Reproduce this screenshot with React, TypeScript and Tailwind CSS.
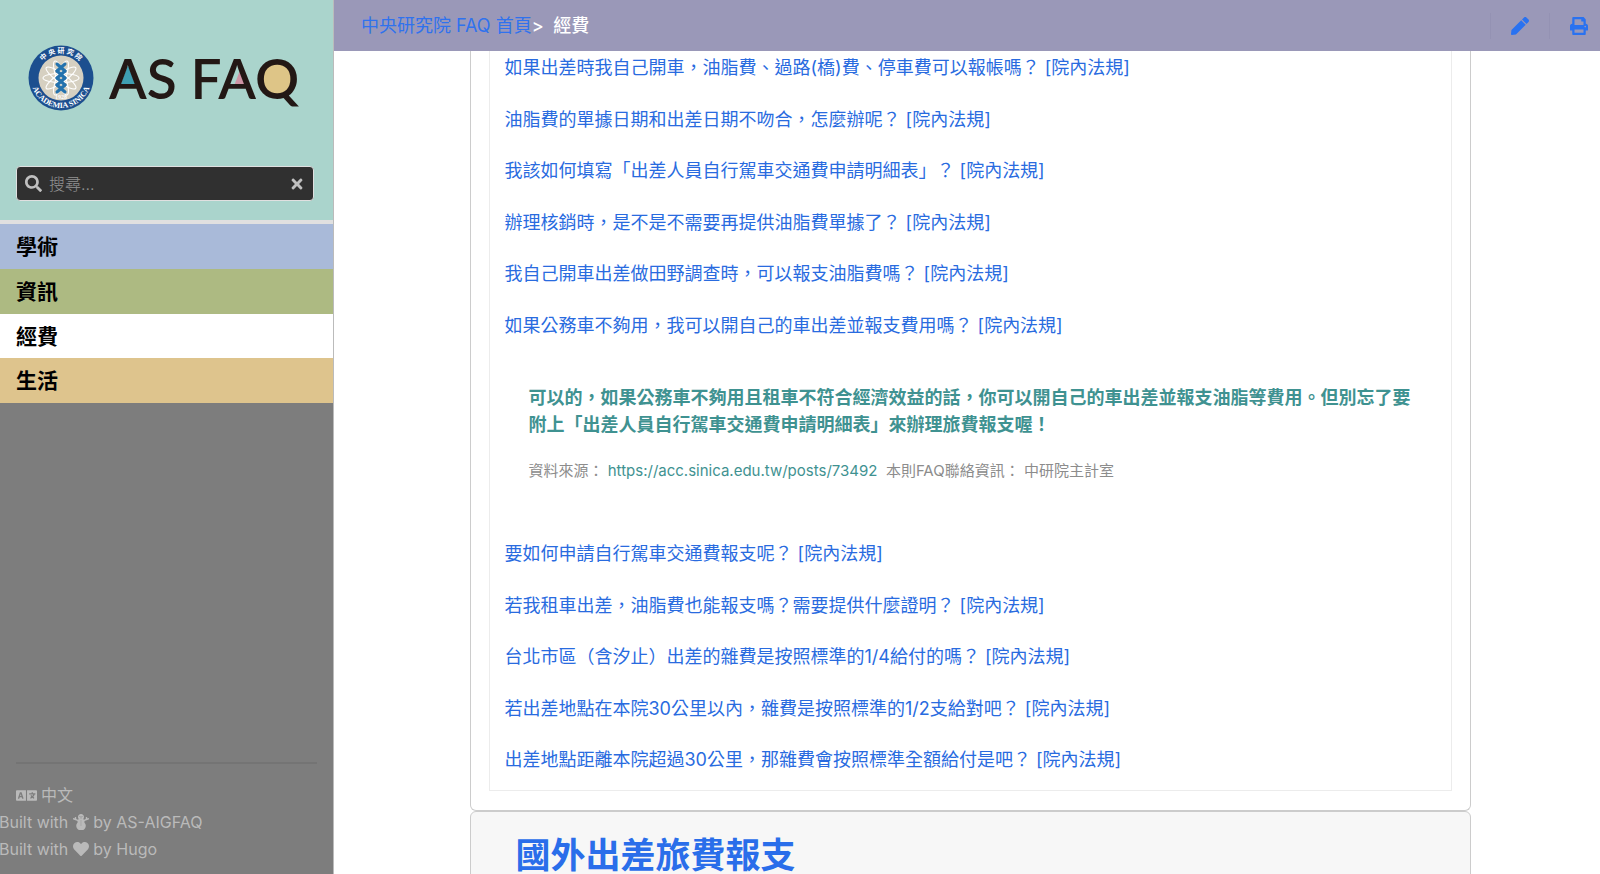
import React from "react";
import {
  FaHeart,
  FaLanguage,
  FaPen,
  FaPrint,
  FaSearch,
  FaSnowman,
  FaTimes,
} from "react-icons/fa";

const questionsBefore = [
  "如果出差時我自己開車，油脂費、過路(橋)費、停車費可以報帳嗎？ [院內法規]",
  "油脂費的單據日期和出差日期不吻合，怎麼辦呢？ [院內法規]",
  "我該如何填寫「出差人員自行駕車交通費申請明細表」？ [院內法規]",
  "辦理核銷時，是不是不需要再提供油脂費單據了？ [院內法規]",
  "我自己開車出差做田野調查時，可以報支油脂費嗎？ [院內法規]",
  "如果公務車不夠用，我可以開自己的車出差並報支費用嗎？ [院內法規]",
];

const questionsAfter = [
  "要如何申請自行駕車交通費報支呢？ [院內法規]",
  "若我租車出差，油脂費也能報支嗎？需要提供什麼證明？ [院內法規]",
  "台北市區（含汐止）出差的雜費是按照標準的1/4給付的嗎？ [院內法規]",
  "若出差地點在本院30公里以內，雜費是按照標準的1/2支給對吧？ [院內法規]",
  "出差地點距離本院超過30公里，那雜費會按照標準全額給付是吧？ [院內法規]",
];

const menu = [
  { label: "學術", color: "bg-[#a9bad9]" },
  { label: "資訊", color: "bg-[#adba82]" },
  { label: "經費", color: "bg-white" },
  { label: "生活", color: "bg-[#dec48d]" },
];

const petals = [0, 35, 70, 110, 145];
const links = [0, 1, 2, 3];

function Logo() {
  return (
    <svg viewBox="0 0 276 70" className="block w-full" role="img" aria-label="AS FAQ">
      <defs>
        <path id="sealTop" d="M 9 34 A 25 25 0 0 1 59 34" />
        <path id="sealBottom" d="M 4 34 A 30 30 0 0 0 64 34" />
      </defs>
      <circle cx="34" cy="34" r="32.5" fill="#1c4f8f" />
      <circle cx="34" cy="34" r="22.5" fill="#d6d0c1" />
      <g fill="none" stroke="#ffffff" strokeWidth="1.1">
        {petals.map((a) => (
          <ellipse key={a} cx="34" cy="34" rx="18" ry="4.5" transform={`rotate(${a} 34 34)`} />
        ))}
      </g>
      <g fill="none" stroke="#2472ad" strokeWidth="3" strokeLinecap="round">
        {links.map((i) => (
          <g key={i}>
            <path d={`M 30 ${20 + i * 7} L 38 ${27 + i * 7}`} />
            <path d={`M 38 ${20 + i * 7} L 30 ${27 + i * 7}`} />
          </g>
        ))}
      </g>
      <text fill="#ffffff" fontSize="7" fontWeight="700" fontFamily="'Noto Sans CJK TC', sans-serif" textAnchor="middle">
        <textPath href="#sealTop" startOffset="50%">中 央 研 究 院</textPath>
      </text>
      <text fill="#ffffff" fontSize="8" fontWeight="700" fontFamily="'Liberation Serif', serif" textAnchor="middle">
        <textPath href="#sealBottom" startOffset="50%">ACADEMIA SINICA</textPath>
      </text>
      <text x="34" y="55" fill="#ffffff" fontSize="6" fontWeight="700" fontFamily="'Liberation Serif', serif" textAnchor="middle">1928</text>
      <polygon points="101,21 93,42 109,42" fill="#3f9fb2" />
      <polygon points="215,21 207,42 223,42" fill="#cf94a4" />
      <ellipse cx="251" cy="35" rx="15" ry="17" fill="#dec587" />
      <text x="82" y="55" fill="#231815" fontSize="55" fontWeight="600" fontFamily="Lato, sans-serif">
        AS FAQ
      </text>
    </svg>
  );
}

function QuestionList({ items }: { items: string[] }) {
  return (
    <ul>
      {items.map((q) => (
        <li key={q} className="px-[15px] py-2.5 leading-[1.75]">
          <a href="#" className="text-[#296bdf]">{q}</a>
        </li>
      ))}
    </ul>
  );
}

export default function App() {
  return (
    <div
      lang="zh-TW"
      className="flex h-screen overflow-hidden bg-white font-[Inter,'Noto_Sans_CJK_TC',sans-serif] text-lg"
    >
      <aside className="flex w-[334px] shrink-0 flex-col border-r border-[#bbbbbb] bg-[#7d7d7d]">
        <div className="border-b-4 border-[#e0e0e0] bg-[#aad4cc] pt-11 pr-[19px] pb-[19px] pl-4">
          <a href="#" className="block px-[11px]">
            <Logo />
          </a>
          <form className="mt-[52px] flex h-[35px] items-center gap-[7px] rounded-sm border border-[#e0e0e0] bg-[#303030] px-2 text-[#c0c0c0]">
            <label htmlFor="search" aria-label="搜尋">
              <FaSearch className="size-[17px]" />
            </label>
            <input
              id="search"
              type="text"
              placeholder="搜尋..."
              className="min-w-0 flex-1 bg-transparent text-base font-light text-[#a0a0a0] outline-none placeholder:text-[#929292]"
            />
            <button type="reset" aria-label="清除">
              <FaTimes className="size-4" />
            </button>
          </form>
        </div>
        <nav>
          {menu.map((m) => (
            <a
              key={m.label}
              href="#"
              className={`block px-4 pt-[5px] pb-[3px] text-[21px] leading-[1.75] font-bold text-black ${m.color}`}
            >
              {m.label}
            </a>
          ))}
        </nav>
        <footer className="mt-auto pb-[11px] text-base leading-[27px] text-[#bababa]">
          <hr className="mx-4 mb-[18px] border-t-2 border-[#747474]" />
          <div className="flex items-center gap-1 px-4">
            <FaLanguage className="size-[21px]" />
            <a href="#">中文</a>
          </div>
          <p className="-ml-px">
            Built with <FaSnowman className="inline size-4 align-[-2px]" /> by <a href="#">AS-AIGFAQ</a>
          </p>
          <p className="-ml-px">
            Built with <FaHeart className="inline size-4 align-[-2px]" /> by <a href="#">Hugo</a>
          </p>
        </footer>
      </aside>

      <div className="flex min-w-0 flex-1 flex-col">
        <header className="z-10 flex h-[51px] shrink-0 items-center justify-between bg-[#9a98b8] pr-3 pl-[27px]">
          <div className="text-[#2f72ee]">
            <a href="#">中央研究院 FAQ 首頁</a>
            <span className="font-medium text-white">&gt;&nbsp; 經費</span>
          </div>
          <div className="flex items-center text-[#2a72f0]">
            <a href="#" aria-label="編輯" className="border-l border-[#9492b3] px-5 py-1">
              <FaPen className="size-[18px]" />
            </a>
            <a href="#" aria-label="列印" className="border-l border-[#9492b3] py-1 pl-5">
              <FaPrint className="size-[18px]" />
            </a>
          </div>
        </header>

        <main className="-mt-[9px] flex justify-center pl-1.5">
          <div className="w-full max-w-[1001px]">
            <section className="rounded-b-md border border-t-0 border-[#cccccc] px-[18px] pb-[19px]">
              <div className="border border-t-0 border-[#ececec] pb-1">
                <QuestionList items={questionsBefore} />
                <div className="px-[39px] pt-[33px] pb-11">
                  <p className="leading-[27px] font-bold text-[#3f9291]">
                    可以的，如果公務車不夠用且租車不符合經濟效益的話，你可以開自己的車出差並報支油脂等費用。但別忘了要附上「出差人員自行駕車交通費申請明細表」來辦理旅費報支喔！
                  </p>
                  <p className="mt-[19px] text-[15px] leading-[27px] text-[#8c8c8c]">
                    資料來源：{" "}
                    <a href="#" className="text-[#3f9291]">https://acc.sinica.edu.tw/posts/73492</a>
                    &nbsp; 本則FAQ聯絡資訊： 中研院主計室
                  </p>
                </div>
                <QuestionList items={questionsAfter} />
              </div>
            </section>
            <section className="rounded-t-md border border-[#cccccc] bg-[#f7f7f7] px-[45px] pt-[17px] pb-5">
              <h2 className="text-[35px] leading-[52px] font-bold">
                <a href="#" className="text-[#2a6eea]">國外出差旅費報支</a>
              </h2>
            </section>
          </div>
        </main>
      </div>
    </div>
  );
}
